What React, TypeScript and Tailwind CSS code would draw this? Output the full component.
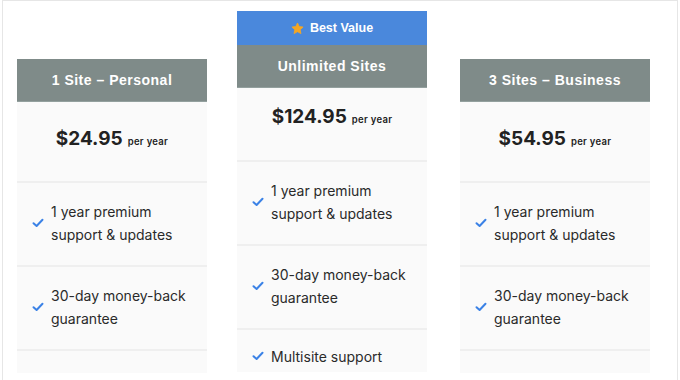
import React from "react";

const font = { fontFamily: "Inter, 'Liberation Sans', sans-serif" };

function Check() {
  return (
    <svg width="12" height="10" viewBox="0 0 12 10" className="shrink-0">
      <polyline
        points="1.5,5.2 4.6,8 10.5,1.8"
        fill="none"
        stroke="#3b82e6"
        strokeWidth="2"
        strokeLinecap="round"
        strokeLinejoin="round"
      />
    </svg>
  );
}

function Feature({ lines, h }: { lines: string[]; h: string }) {
  return (
    <div className={`flex items-center gap-[7px] pl-[15px] pb-[3px] border-b-2 border-[#efefef] ${h}`}>
      <Check />
      <span className="text-[14px] leading-[23px] text-[#2a2a2a]">
        {lines.map((l) => (
          <span key={l} className="block">
            {l}
          </span>
        ))}
      </span>
    </div>
  );
}

function Header({ title }: { title: string }) {
  return (
    <div
      className="h-[43px] flex items-center justify-center bg-[#7f8b89] border-b border-[#93a09e] text-white text-[14px] font-bold tracking-[0.5px]"
      style={{ fontFamily: "'Liberation Sans', Arial, sans-serif" }}
    >
      {title}
    </div>
  );
}

function Price({ amount, h, pt }: { amount: string; h: string; pt: string }) {
  return (
    <div className={`flex justify-center items-start border-b-2 border-[#efefef] ${h} ${pt}`}>
      <div className="flex items-baseline gap-[5px] text-[#222]">
        <span className="text-[19px] leading-[19px] font-bold">{amount}</span>
        <span className="text-[9.5px] font-semibold tracking-[0.3px]">per year</span>
      </div>
    </div>
  );
}

function SideCard({ title, amount }: { title: string; amount: string }) {
  return (
    <div className="w-[190px] mt-[58px] shrink-0">
      <Header title={title} />
      <div className="bg-[#fafafa]">
        <Price amount={amount} h="h-[81px]" pt="pt-[27px]" />
        <Feature lines={["1 year premium", "support & updates"]} h="h-[84px]" />
        <Feature lines={["30-day money-back", "guarantee"]} h="h-[84px]" />
        <div className="h-[22px]" />
      </div>
    </div>
  );
}

export default function App() {
  return (
    <div className="h-[380px] overflow-hidden bg-white" style={font}>
      <div className="ml-[2px] w-[676px] h-[400px] border border-[#e6e6e6] flex items-start pl-[14px]">
        <SideCard title="1 Site – Personal" amount="$24.95" />
        <div className="w-[190px] ml-[30px] mt-[10px] shrink-0">
          <div
            className="h-[34px] flex items-center justify-center gap-[6px] bg-[#4a88dc] text-white text-[12.5px] font-bold"
            style={{ fontFamily: "'Liberation Sans', Arial, sans-serif" }}
          >
            <svg width="13" height="13" viewBox="0 0 24 24">
              <path
                d="M12 1.8l3.1 6.6 7.2.9-5.3 5 1.4 7.1L12 17.9l-6.4 3.5L7 14.3l-5.3-5 7.2-.9z"
                fill="#f5a623"
                stroke="#f5a623"
                strokeWidth="1.5"
                strokeLinejoin="round"
              />
            </svg>
            Best Value
          </div>
          <Header title="Unlimited Sites" />
          <div className="bg-[#fafafa]">
            <Price amount="$124.95" h="h-[74px]" pt="pt-[19px]" />
            <Feature lines={["1 year premium", "support & updates"]} h="h-[84px]" />
            <Feature lines={["30-day money-back", "guarantee"]} h="h-[84px]" />
            <div className="h-[42px] flex items-center gap-[7px] pl-[15px] pt-[10px]">
              <Check />
              <span className="text-[14px] leading-[23px] text-[#2a2a2a]">Multisite support</span>
            </div>
          </div>
        </div>
        <div className="ml-[33px]">
          <SideCard title="3 Sites – Business" amount="$54.95" />
        </div>
      </div>
    </div>
  );
}
